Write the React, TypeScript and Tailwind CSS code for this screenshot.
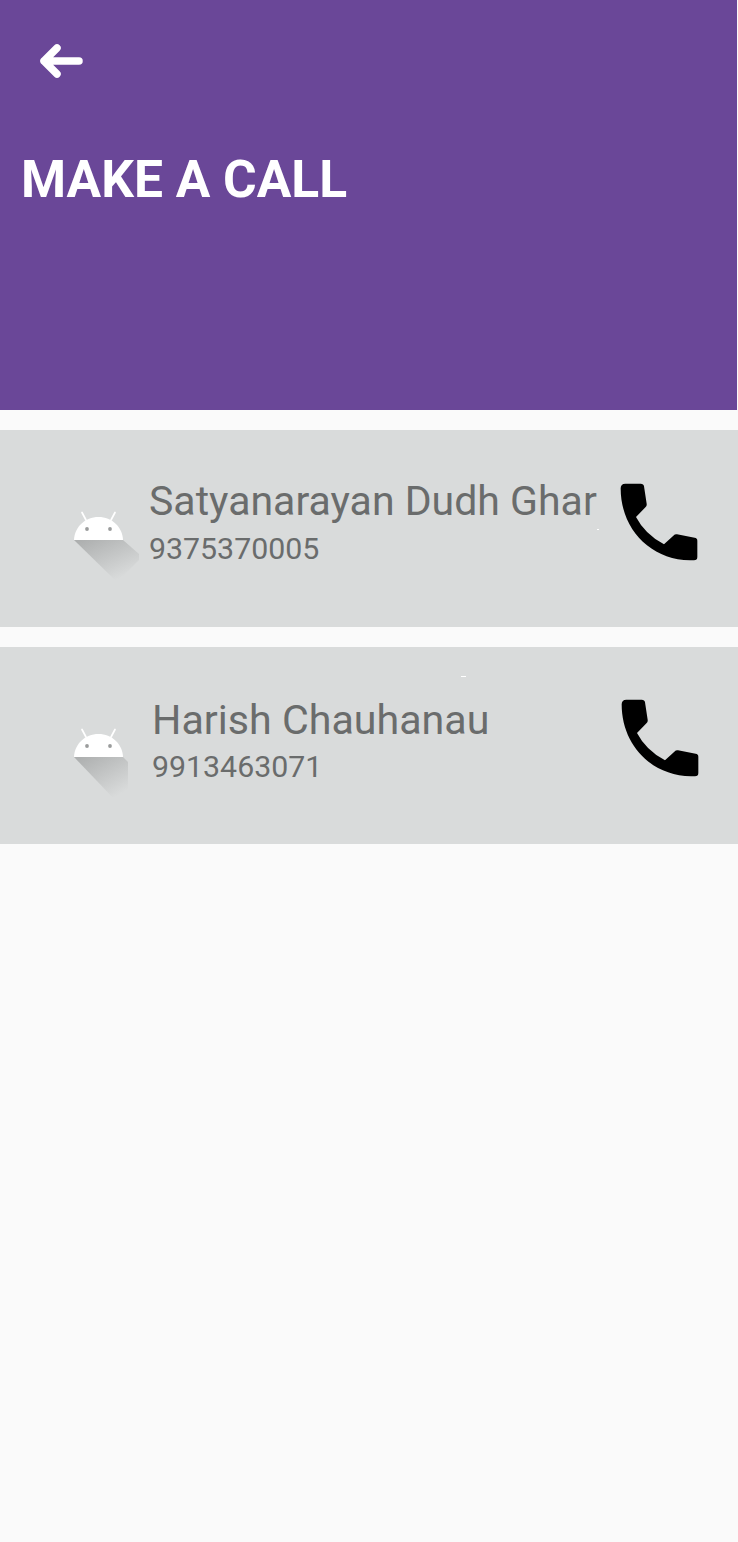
function AndroidShadowIcon({ id, clipped }: { id: string; clipped?: boolean }) {
  return (
    <svg width="72" height="80" viewBox="0 0 72 80" className="mt-[78px] ml-[70px] w-[72px] shrink-0">
      <defs>
        <linearGradient id={id} x1="0.1" y1="0" x2="0.72" y2="0.9">
          <stop offset="0" stopColor="#adafaf" />
          <stop offset="1" stopColor="#d9dbdb" />
        </linearGradient>
      </defs>
      {/* long shadow */}
      <polygon
        fill={`url(#${id})`}
        points={clipped ? "4,32 53,32 58,37 58,68 48,78" : "4,32 53,32 69,46 69,52 47,74"}
      />
      {/* antennas */}
      <path d="M12 4.5 L16 12 M45 4.5 L41 12" stroke="#fff" strokeWidth="1.7" strokeLinecap="round" />
      {/* head */}
      <path d="M4 32 C4.5 19 15 9 28.5 9 C42 9 52.5 19 53 32 Z" fill="#fff" />
      <circle cx="17" cy="21" r="1.9" fill="#9a9c9c" />
      <circle cx="40" cy="21" r="1.9" fill="#9a9c9c" />
    </svg>
  );
}

function PhoneIcon({ className }: { className: string }) {
  return (
    <svg viewBox="120 68 234 234" className={className} fill="#000">
      <path d="M136 70 H182 Q191 70 192 78 L200 130 Q201 136 197 140 L168 170 Q195 222 252 252 L280 226 Q285 221 291 222 L344 232 Q352 233 352 241 V290 Q352 300 342 300 H330 C210 298 122 205 122 84 Q122 70 136 70 Z" />
    </svg>
  );
}

export default function App() {
  return (
    <div className="min-h-[1542px] bg-[#fafafa] font-['Roboto',sans-serif]">
      <header className="h-[410px] bg-[#6a4798] pt-[28px] mr-px">
        <svg width="60" height="60" viewBox="0 0 60 60" className="ml-[31px]" fill="none" stroke="#fff" strokeWidth="7.5" strokeLinecap="round" strokeLinejoin="round">
          <path d="M13 33 H48 M26 20 L13 33 L26 46" />
        </svg>
        <h1 className="ml-[21px] mt-[60px] text-[51.5px] leading-[64px] font-bold text-white">MAKE A CALL</h1>
      </header>

      <div className="mt-5 flex flex-col gap-5">
        <div className="relative flex h-[197px] items-start bg-[#d9dbdb]">
          <AndroidShadowIcon id="shadow-a" />
          <div className="ml-[7px] mt-[44px] text-[#6a6c6c]">
            <p className="text-[41px] leading-[54px] whitespace-nowrap">Satyanarayan Dudh Ghar</p>
            <p className="mt-[2px] text-[30.3px] leading-[38px]">9375370005</p>
          </div>
          <PhoneIcon className="absolute left-[620px] top-[53px] size-[78px]" />
          <span className="absolute left-[597px] top-[99px] h-px w-[2px] bg-white" />
        </div>

        <div className="relative flex h-[197px] items-start bg-[#d9dbdb]">
          <AndroidShadowIcon id="shadow-b" clipped />
          <div className="ml-[10px] mt-[46px] text-[#6a6c6c]">
            <p className="text-[41.2px] leading-[54px] whitespace-nowrap">Harish Chauhanau</p>
            <p className="mt-px text-[30.3px] leading-[38px]">9913463071</p>
          </div>
          <PhoneIcon className="absolute left-[621px] top-[52px] size-[78px]" />
          <span className="absolute left-[461px] top-[29px] h-px w-[5px] bg-white" />
        </div>
      </div>
    </div>
  );
}
